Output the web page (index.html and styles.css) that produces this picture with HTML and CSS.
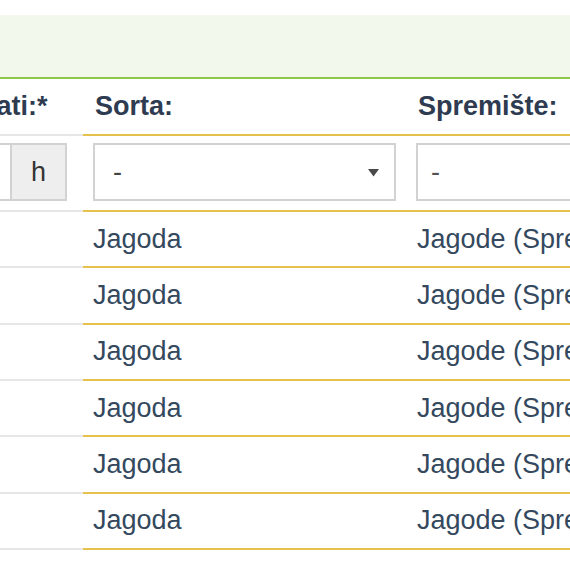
FILE: index.html
```html
<!DOCTYPE html>
<html>
<head>
<meta charset="utf-8">
<link rel="stylesheet" href="styles.css">
</head>
<body>
<div class="page">
  <div class="banner"></div>
  <div class="grid">
    <div class="cell head c1">Broj sati:*</div>
    <div class="cell head c2">Sorta:</div>
    <div class="cell head c3">Spremište:</div>

    <div class="cell filter c1">
      <div class="group">
        <div class="gin"></div>
        <div class="addon">h</div>
      </div>
    </div>
    <div class="cell filter c2">
      <div class="select">
        <span>-</span>
        <svg class="arrow" width="11" height="9" viewBox="0 0 11 9"><polygon points="0,1 11,1 5.5,8.5" fill="#4a4a4a"/></svg>
      </div>
    </div>
    <div class="cell filter c3">
      <div class="input"><span>-</span></div>
    </div>

    <div class="cell row c1"></div><div class="cell row c2">Jagoda</div><div class="cell row c3">Jagode (Spremište 1)</div>
    <div class="cell row c1"></div><div class="cell row c2">Jagoda</div><div class="cell row c3">Jagode (Spremište 1)</div>
    <div class="cell row c1"></div><div class="cell row c2">Jagoda</div><div class="cell row c3">Jagode (Spremište 1)</div>
    <div class="cell row c1"></div><div class="cell row c2">Jagoda</div><div class="cell row c3">Jagode (Spremište 1)</div>
    <div class="cell row c1"></div><div class="cell row c2">Jagoda</div><div class="cell row c3">Jagode (Spremište 1)</div>
    <div class="cell row c1"></div><div class="cell row c2">Jagoda</div><div class="cell row c3">Jagode (Spremište 1)</div>
  </div>
</div>
</body>
</html>
```
FILE: styles.css
```css
html, body {
  margin: 0;
  padding: 0;
  background: #fff;
  overflow: hidden;
}
.page {
  width: 570px;
  height: 570px;
  overflow: hidden;
  padding-top: 15px;
  box-sizing: border-box;
  font-family: "Liberation Sans", Arial, sans-serif;
  font-size: 27px;
  color: #34495e;
}
.banner {
  height: 62px;
  background: #f2f8ec;
  border-bottom: 2px solid #8cc94c;
}
.grid {
  display: grid;
  grid-template-columns: 173px 323px 400px;
  margin-left: -90px;
  width: 896px;
}
.cell {
  box-sizing: border-box;
  border-bottom: 2px solid #e6c24c;
  padding: 0 10px;
  display: flex;
  align-items: center;
  white-space: nowrap;
  overflow: hidden;
}
.cell.c1 {
  border-bottom-color: #e6e6e6;
}
.head {
  height: 57px;
  font-weight: bold;
  color: #2e3b50;
}
.head.c2, .head.c3 {
  padding-left: 12px;
}
.row.c3 {
  padding-left: 11px;
}
.filter {
  height: 76px;
  padding-top: 7px;
  padding-bottom: 9px;
  align-items: stretch;
}
.row {
  height: 56.33px;
}
.group {
  display: flex;
  width: 147px;
}
.gin {
  flex: 1;
  border: 2px solid #d2d2d2;
  border-right: none;
  background: #fff;
}
.addon {
  width: 53px;
  background: #eeeeee;
  border: 2px solid #d2d2d2;
  display: flex;
  align-items: center;
  justify-content: center;
  color: #333;
}
.select {
  width: 303px;
  box-sizing: border-box;
  border: 2px solid #d2d2d2;
  display: flex;
  align-items: center;
  justify-content: space-between;
  padding: 0 15px 0 18px;
  color: #444;
}
.arrow {
  display: block;
}
.input {
  width: 380px;
  box-sizing: border-box;
  border: 2px solid #d2d2d2;
  display: flex;
  align-items: center;
  padding-left: 13px;
  color: #555;
}
```
